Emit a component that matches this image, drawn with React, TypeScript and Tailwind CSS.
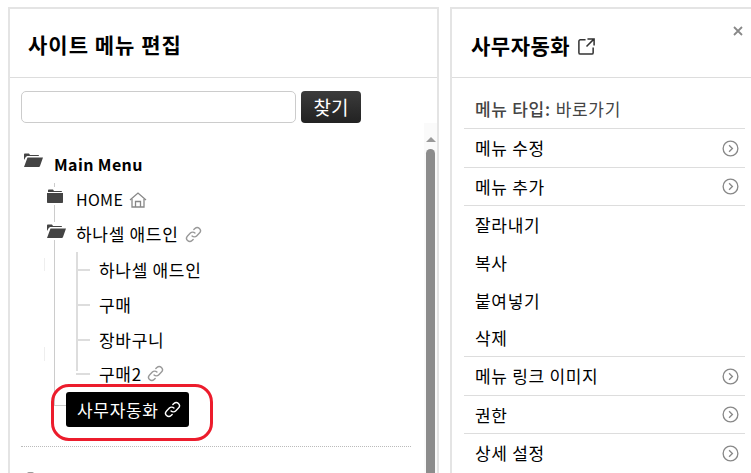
const font = { fontFamily: '"Noto Sans CJK KR", "Liberation Sans", sans-serif' };

const LinkIcon = ({ className }: { className?: string }) => (
  <svg viewBox="0 0 24 24" className={className} fill="none" stroke="currentColor" strokeWidth="2" strokeLinecap="round">
    <path d="M10 14a4.500 4.500 0 0 0 6.400 0l4-4a4.500 4.500 0 0 0-6.400-6.400l-1.500 1.500" />
    <path d="M14 10a4.500 4.500 0 0 0-6.400 0l-4 4a4.500 4.500 0 0 0 6.400 6.400l1.500-1.500" />
  </svg>
);

const HomeIcon = () => (
  <svg viewBox="0 0 18 18" className="ml-[6px] h-[18px] w-[18px] text-[#888]" fill="none" stroke="currentColor" strokeWidth="1.300">
    <path d="M1 9l8-7 8 7" />
    <path d="M3 8v8h12V8" />
    <path d="M6.500 16v-5.500h5V16" />
  </svg>
);

const FolderClosedIcon = () => (
  <svg viewBox="0 0 16 14" className="h-[14px] w-[16px] text-[#444]" fill="currentColor">
    <path d="M1 3V1.500C1 1 1.400.5 2 .5h4l1 1.500h7c.6 0 1 .4 1 1H1z" />
    <path d="M0 4h16v9c0 .6-.4 1-1 1H1c-.6 0-1-.4-1-1V4z" />
  </svg>
);

const FolderOpenIcon = () => (
  <svg viewBox="0 0 20 14" className="h-[14px] w-[20px] text-[#444]" fill="currentColor">
    <path d="M1 5V1.500C1 1 1.400.5 2 .5h4l1 1.500h8c.6 0 1 .4 1 1H5C3.800 3 3 3.500 2.500 4.500L1 7z" />
    <path d="M4.500 4.500H20l-3 8.500c-.2.600-.6 1-1.200 1H1z" />
  </svg>
);

const CircleChevron = () => (
  <svg viewBox="0 0 18 18" className="h-[17px] w-[17px] text-[#888]" fill="none" stroke="currentColor" strokeWidth="1.400">
    <circle cx="9" cy="9" r="7.800" />
    <path d="M7.500 5.500L11 9l-3.500 3.500" />
  </svg>
);

const ExternalIcon = () => (
  <svg viewBox="0 0 20 20" className="ml-[7px] h-[19px] w-[19px] text-[#333]" fill="none" stroke="currentColor" strokeWidth="1.600">
    <path d="M9 3H3.500C2.700 3 2 3.700 2 4.500v12c0 .8.700 1.500 1.500 1.500h12c.8 0 1.500-.7 1.500-1.500V11" />
    <path d="M11 2h7v7M18 2l-8 8" />
  </svg>
);

const subItems = [
  { label: "하나셀 애드인", h: "h-[35px]" },
  { label: "구매", h: "h-[35px]" },
  { label: "장바구니", h: "h-[35px]" },
];

const menu = [
  { label: "메뉴 수정", arrow: true, cls: "h-[39px] border-b border-[#ddd]" },
  { label: "메뉴 추가", arrow: true, cls: "h-[38px] border-b border-[#ddd]" },
  { label: "잘라내기", arrow: false, cls: "h-[38px]" },
  { label: "복사", arrow: false, cls: "h-[38px]" },
  { label: "붙여넣기", arrow: false, cls: "h-[38px]" },
  { label: "삭제", arrow: false, cls: "h-[37px] border-b border-[#ddd]" },
  { label: "메뉴 링크 이미지", arrow: true, cls: "h-[39px] border-b border-[#ddd]" },
  { label: "권한", arrow: true, cls: "h-[38px] border-b border-[#ddd]" },
  { label: "상세 설정", arrow: true, cls: "h-[38px]" },
];

const App = () => {
  return (
    <div style={font} className="flex h-[473px] w-[751px] gap-[11px] overflow-hidden bg-white pt-[7px] pl-[8px] text-black">
      {/* left panel */}
      <div className="h-[480px] w-[431px] shrink-0 border-2 border-b-0 border-[#e4e4e4]">
        <div className="flex h-[69px] items-center border-b border-[#ddd] pt-[4px] pl-[18px] text-[21px] font-bold tracking-[1px]">
          사이트 메뉴 편집
        </div>
        <div className="flex gap-[5px] pt-[13px] pl-[11px]">
          <input className="h-[32px] w-[275px] rounded-[5px] border border-[#ccc] bg-white" />
          <button className="h-[32px] w-[60px] rounded-[4px] bg-gradient-to-b from-[#3c3c3c] to-[#222] text-[19px] text-white">
            찾기
          </button>
        </div>

        <div className="flex">
          <div className="w-[414px] shrink-0">
            <div className="mt-[25px] flex h-[34px] items-center pl-[13px]">
              <div className="relative bottom-[5px]">
                <FolderOpenIcon />
              </div>
              <span className="mb-[2px] ml-[11px] text-[16px] font-bold tracking-[0.4px]">Main Menu</span>
            </div>
            <div className="relative mt-px pl-[36px]">
              <div className="absolute top-0 left-[44px] h-[222px] w-px bg-[#ccc]" />
              <div className="absolute top-[222px] left-[44px] h-px w-[12px] bg-[#ccc]" />
              <div className="absolute top-[75px] left-[34px] h-[13px] w-px bg-[#eee]" />
              <div className="absolute top-[164px] left-[34px] h-[14px] w-px bg-[#eee]" />
              <div className="flex h-[34px] items-center">
                <div className="relative bottom-[4px] ml-px bg-white py-[2px]">
                  <FolderClosedIcon />
                </div>
                <span className="mb-[2px] ml-[13px] text-[16px] tracking-[0.3px]">HOME</span>
                <HomeIcon />
              </div>
              <div className="flex h-[34px] items-center">
                <div className="relative bottom-[3px] bg-white py-[2px]">
                  <FolderOpenIcon />
                </div>
                <span className="ml-[10px] text-[17px] tracking-[0.7px]">하나셀 애드인</span>
                <LinkIcon className="ml-[6px] h-[17px] w-[17px] text-[#999]" />
              </div>
              <div className="relative mt-[1px] ml-[30px]">
                <div className="absolute top-0 left-0 h-[119px] w-[2px] bg-[#ddd]" />
                {subItems.map((item) => (
                  <div key={item.label} className={"flex items-center " + item.h}>
                    <div className="h-[2px] w-[14px] bg-[#ddd]" />
                    <span className="ml-[9px] text-[17px] tracking-[0.7px]">{item.label}</span>
                  </div>
                ))}
                <div className="flex h-[33px] items-center">
                  <div className="h-[2px] w-[14px] bg-[#ddd]" />
                  <span className="ml-[9px] text-[17px] tracking-[0.7px]">구매2</span>
                  <LinkIcon className="ml-[5px] h-[17px] w-[17px] text-[#999]" />
                </div>
              </div>
              <div className="relative mt-[2px] ml-[20px] flex h-[35px] w-[123px] items-center rounded-[3px] bg-black pl-[11px] text-[17px] tracking-[0.7px] text-white">
                사무자동화
                <LinkIcon className="ml-[5px] h-[17px] w-[17px] text-white" />
                <div className="absolute top-[-8px] left-[-15px] h-[57px] w-[162px] rounded-[18px] border-[3px] border-[#ec1c2c]" />
              </div>
            </div>
            <div className="mt-[19px] ml-[11px] w-[390px] border-t border-dotted border-[#bbb]" />
            <div className="mt-[25px] ml-[17px] h-[3px] w-[7px] rounded-t-[2px] bg-[#999]" />
          </div>
          <div className="flex w-[14px] flex-col items-center bg-[#fafafa] pt-[14px]">
            <div className="h-0 w-0 border-x-[5px] border-b-[5px] border-x-transparent border-b-[#999]" />
            <div className="mt-[7px] h-[340px] w-[9px] rounded-t-[5px] bg-[#8c8c8c]" />
          </div>
        </div>
      </div>

      {/* right panel */}
      <div className="h-[480px] w-[310px] shrink-0 border-2 border-r-0 border-b-0 border-[#e4e4e4]">
        <div className="relative flex h-[69px] items-center border-b border-[#ddd] pt-[6px] pl-[19px] text-[21px] font-bold tracking-[0.5px]">
          사무자동화
          <ExternalIcon />
          <svg viewBox="0 0 10 10" className="absolute top-[17px] right-[17px] h-[10px] w-[10px] text-[#888]" fill="none" stroke="currentColor" strokeWidth="1.800">
            <path d="M1 1l8 8M9 1l-8 8" />
          </svg>
        </div>
        <div className="pt-[11px] pr-[15px] pl-[12px] text-[17px] tracking-[0.7px]">
          <div className="flex h-[40px] items-center border-b border-[#ddd] pl-[11px] text-[#444]">
            <span className="font-medium">메뉴 타입:</span>
            <span className="ml-[5px]">바로가기</span>
          </div>
          {menu.map((item) => (
            <div key={item.label} className={"flex items-center justify-between pr-[6px] pl-[11px] " + item.cls}>
              <span>{item.label}</span>
              {item.arrow && <CircleChevron />}
            </div>
          ))}
        </div>
      </div>
    </div>
  );
};

export default App;
